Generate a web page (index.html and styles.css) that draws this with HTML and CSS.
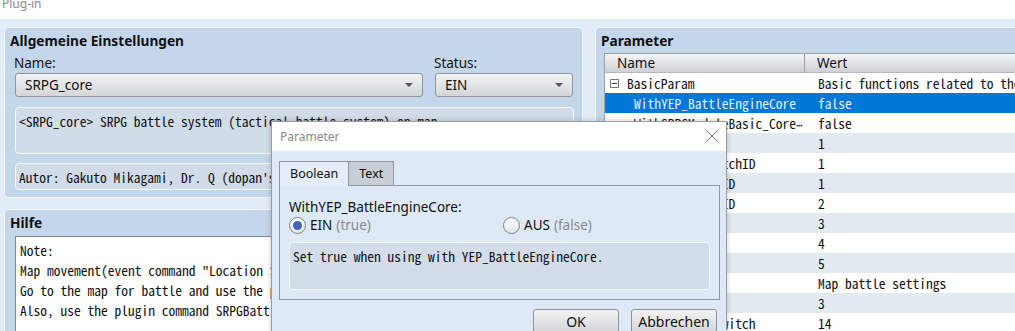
FILE: index.html
```html
<!DOCTYPE html>
<html lang="de">
<head>
<meta charset="utf-8">
<title>Plug-in</title>
<link rel="stylesheet" href="styles.css">
</head>
<body>
<div class="wintitle"><span>Plug-in</span></div>
<div class="main">
  <div class="leftcol">
    <section class="panel general">
      <div class="ptitle">Allgemeine Einstellungen</div>
      <div class="fields">
        <div class="field fname">
          <div class="flabel">Name:</div>
          <div class="combo"><span>SRPG_core</span><span class="arrow"></span></div>
        </div>
        <div class="field fstatus">
          <div class="flabel">Status:</div>
          <div class="combo"><span>EIN</span><span class="arrow"></span></div>
        </div>
      </div>
      <div class="infobox desc">&lt;SRPG_core&gt; SRPG battle system (tactical battle system) on map.</div>
      <div class="infobox author">Autor: Gakuto Mikagami, Dr. Q (dopan's assistant)</div>
    </section>
    <section class="panel help">
      <div class="ptitle">Hilfe</div>
      <div class="helptext">
        <div>Note:</div>
        <div>Map movement(event command "Location Settings") is disabled on battle map.</div>
        <div>Go to the map for battle and use the plugin command SRPGBattle Start.</div>
        <div>Also, use the plugin command SRPGBattle End to end the battle.</div>
      </div>
    </section>
  </div>
  <section class="panel params">
    <div class="ptitle">Parameter</div>
    <div class="ptable">
      <div class="thead"><div class="th">Name</div><div class="th">Wert</div></div>
      <div class="row"><div class="cn group"><span class="tog"></span>BasicParam</div><div class="cv">Basic functions related to the battle system</div></div>
      <div class="row sel"><div class="cn">WithYEP_BattleEngineCore</div><div class="cv">false</div></div>
      <div class="row"><div class="cn">WithSRPGModuleBasic_Core<span class="ell">⋯</span></div><div class="cv">false</div></div>
      <div class="row"><div class="cn">srpgTroopID</div><div class="cv">1</div></div>
      <div class="row"><div class="cn">srpgBattleSwitchID</div><div class="cv">1</div></div>
      <div class="row"><div class="cn">existActorVarID</div><div class="cv">1</div></div>
      <div class="row"><div class="cn">existEnemyVarID</div><div class="cv">2</div></div>
      <div class="row"><div class="cn">turnVarID</div><div class="cv">3</div></div>
      <div class="row"><div class="cn">activeEventID</div><div class="cv">4</div></div>
      <div class="row"><div class="cn">targetEventID</div><div class="cv">5</div></div>
      <div class="row"><div class="cn group"><span class="tog"></span>MapBattleParam</div><div class="cv">Map battle settings</div></div>
      <div class="row"><div class="cn">maxActorVarID</div><div class="cv">3</div></div>
      <div class="row"><div class="cn">mapBattleUseSwitch</div><div class="cv">14</div></div>
    </div>
  </section>
</div>

<div class="dialog">
  <div class="dlg-title">
    <span>Parameter</span>
    <svg class="close" width="12" height="12" viewBox="0 0 12 12"><path d="M0.5 0.5 L11.5 11.5 M11.5 0.5 L0.5 11.5" stroke="#6f6f6f" stroke-width="1" fill="none"/></svg>
  </div>
  <div class="dlg-body">
    <div class="tabs">
      <div class="tab active">Boolean</div>
      <div class="tab">Text</div>
    </div>
    <div class="tabpanel">
      <div class="plabel">WithYEP_BattleEngineCore:</div>
      <div class="radios">
        <div class="radio checked"><span class="circle"></span><span>EIN</span><span class="hint">(true)</span></div>
        <div class="radio"><span class="circle"></span><span>AUS</span><span class="hint">(false)</span></div>
      </div>
      <div class="pdesc">Set true when using with YEP_BattleEngineCore.</div>
    </div>
    <div class="buttons">
      <div class="btn">OK</div>
      <div class="btn">Abbrechen</div>
    </div>
  </div>
</div>
</body>
</html>
```

FILE: styles.css
```css
* { box-sizing: border-box; }
html, body { margin: 0; height: 331px; overflow: hidden; }
body {
  background: #e2edf9;
  font-family: "Noto Sans", "Liberation Sans", sans-serif;
  font-size: 13.5px;
  color: #111;
  position: relative;
}

.wintitle {
  height: 19px;
  background: #fff;
  color: #8c8c8c;
  font-size: 12px;
  line-height: 14px;
  padding-left: 2px;
  overflow: hidden;
}
.wintitle span { display: block; margin-top: -3px; }

.main {
  display: flex;
  gap: 12px;
  padding: 8px 0 0 4px;
  height: 312px;
  overflow: hidden;
}
.leftcol {
  width: 579px;
  flex: none;
  display: flex;
  flex-direction: column;
  gap: 11px;
}
.panel {
  background: #c4d6ea;
  border: 1px solid #f3f7fc;
  border-radius: 5px;
}
.ptitle {
  font-weight: bold;
  font-size: 13.7px;
  line-height: 18px;
  margin-left: 5px;
}

.general { padding: 4px 9px 7px 0; }
.fields { display: flex; gap: 12px; margin: 5px 0 0 10px; }
.fname { width: 408px; }
.fstatus { width: 138px; }
.flabel { line-height: 16px; height: 16px; margin-bottom: 2px; margin-left: -1px; }
.combo {
  height: 24px;
  border: 1px solid #8e949b;
  border-radius: 3px;
  background: linear-gradient(#f3f3f3, #d3d5d8);
  display: flex;
  align-items: center;
  justify-content: space-between;
  padding: 0 9px 0 9px;
  font-size: 13.5px;
}
.arrow {
  width: 0; height: 0;
  border-left: 4px solid transparent;
  border-right: 4px solid transparent;
  border-top: 4px solid #555;
}
.infobox {
  font-family: "Noto Sans Mono CJK JP", "DejaVu Sans Mono", monospace;
  font-size: 13.5px;
  background: #d1dce8;
  border: 1px solid #f5f8fb;
  border-radius: 4px;
  margin-left: 10px;
  width: 559px;
  padding: 3px 3px;
  line-height: 20px;
  white-space: nowrap;
  overflow: hidden;
}
.desc { margin-top: 10px; height: 47px; }
.author { margin-top: 9px; height: 27px; }

.help { flex: 1; padding-top: 4px; }
.helptext {
  margin: 4px 0 0 10px;
  width: 558px;
  height: 120px;
  background: #fff;
  border: 1px solid #828790;
  padding: 3px 4px;
  font-family: "Noto Sans Mono CJK JP", "DejaVu Sans Mono", monospace;
  font-size: 13.5px;
  line-height: 20px;
  white-space: nowrap;
  overflow: hidden;
}

.params { width: 440px; flex: none; padding-top: 4px; }
.ptable {
  margin: 3px 0 0 8px;
  background: #fff;
  border-left: 1px solid #9da1a7;
  border-top: 1px solid #9da1a7;
}
.thead {
  display: grid;
  grid-template-columns: 199px 1fr;
  height: 19px;
  background: linear-gradient(#f4f5f7, #cdd0d5);
  border-bottom: 1px solid #b5b9be;
}
.th { padding-left: 12px; line-height: 19px; font-size: 13.5px; }
.th + .th { border-left: 1px solid #9da1a7; }
.row {
  display: grid;
  grid-template-columns: 200px 1fr;
  height: 20px;
  line-height: 20px;
  font-family: "Noto Sans Mono CJK JP", "DejaVu Sans Mono", monospace;
  font-size: 13.5px;
  white-space: nowrap;
  overflow: hidden;
}
.row:nth-of-type(odd) { background: #e4eaf1; }
.row.sel { background: #0078d7; color: #e6efff; }
.cn { padding-left: 29px; overflow: hidden; }
.cn.group { padding-left: 5px; display: flex; align-items: center; }
.cv { padding-left: 13px; overflow: hidden; }
.ell { font-family: "DejaVu Sans Mono", monospace; font-size: 11px; }
.tog {
  width: 9px; height: 9px;
  border: 1px solid #7a7a7a;
  margin-right: 8px;
  position: relative;
  flex: none;
}
.tog::after {
  content: "";
  position: absolute;
  left: 1px; right: 1px; top: 3px;
  height: 1px;
  background: #333;
}

.dialog {
  position: absolute;
  left: 271px;
  top: 121px;
  width: 456px;
  height: 230px;
  border: 1px solid #9c9c9c;
  background: #dde9f6;
  box-shadow: 0 0 6px rgba(0,0,0,0.2);
}
.dlg-title {
  height: 29px;
  background: #fff;
  display: flex;
  align-items: center;
  justify-content: space-between;
  padding: 0 8px 0 8px;
  color: #8a8a8a;
  font-size: 12px;
}
.close { margin-top: -2px; }
.dlg-body { padding: 10px 6px 0 7px; }
.tabs { display: flex; height: 24px; }
.tab {
  border: 1px solid #8f969e;
  border-bottom: none;
  padding: 0 10px;
  line-height: 23px;
  background: #c8ced6;
  font-size: 12.5px;
}
.tab.active {
  background: #e4edf8;
  border-right: none;
  position: relative;
  z-index: 1;
  height: 25px;
}
.tabpanel {
  height: 115px;
  border: 1px solid #8f969e;
  background: #dde9f6;
  padding: 13px 9px 8px 9px;
}
.plabel { line-height: 16px; height: 16px; font-size: 13.5px; }
.radios {
  display: grid;
  grid-template-columns: 214px auto;
  height: 18px;
  margin-top: 1px;
}
.radio { display: flex; align-items: center; gap: 4px; font-size: 13.5px; }
.radio .hint { color: #8a8a8a; }
.circle {
  width: 17px; height: 17px;
  border-radius: 50%;
  border: 1px solid #7b8088;
  background: linear-gradient(#ffffff, #e4e4e4);
  position: relative;
  flex: none;
}
.radio.checked .circle::after {
  content: "";
  position: absolute;
  left: 3px; top: 3px;
  width: 9px; height: 9px;
  border-radius: 50%;
  background: #3d66b8;
}
.pdesc {
  margin-top: 8px;
  height: 48px;
  background: #d3dde9;
  border: 1px solid #f5f8fb;
  border-radius: 4px;
  padding: 3px 3px;
  line-height: 20px;
  font-family: "Noto Sans Mono CJK JP", "DejaVu Sans Mono", monospace;
  font-size: 13.5px;
}
.buttons {
  display: flex;
  justify-content: flex-end;
  gap: 12px;
  margin-top: 9px;
  padding-right: 3px;
}
.btn {
  width: 86px;
  height: 25px;
  border: 1px solid #8e949b;
  border-radius: 3px;
  background: linear-gradient(#f3f3f3, #d3d5d8);
  text-align: center;
  line-height: 24px;
  font-size: 14px;
}
```
